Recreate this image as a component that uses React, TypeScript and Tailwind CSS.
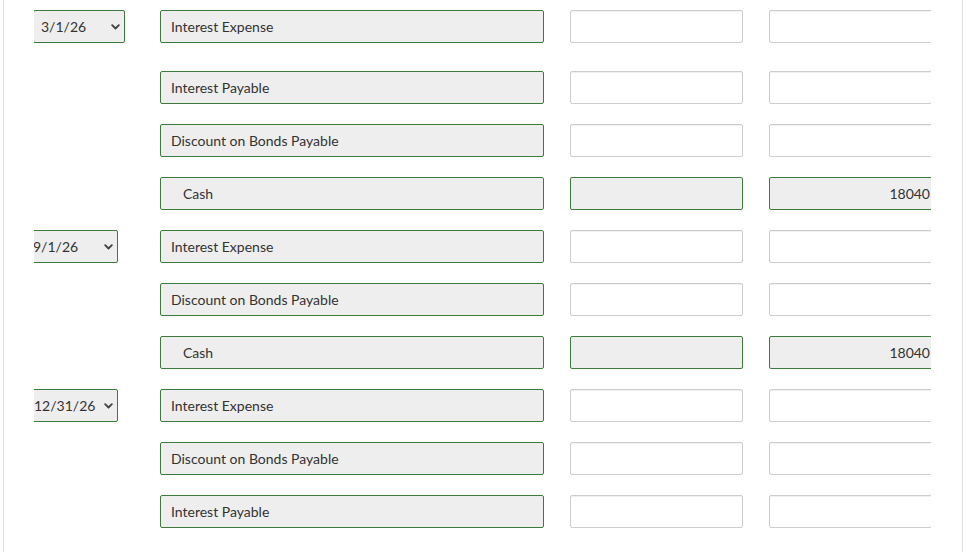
import React from 'react';

type Row = {
  date?: { label: string; shift: number; width: number };
  account: string;
  indent?: boolean;
  credit?: string;
  filled?: boolean;
  top: string;
};

const rows: Row[] = [
  { date: { label: '3/1/26', shift: 1, width: 92 }, account: 'Interest Expense', top: 'mt-[10px]' },
  { account: 'Interest Payable', top: 'mt-[28px]' },
  { account: 'Discount on Bonds Payable', top: 'mt-[20px]' },
  { account: 'Cash', indent: true, credit: '18040', filled: true, top: 'mt-[20px]' },
  { date: { label: '9/1/26', shift: 9, width: 93 }, account: 'Interest Expense', top: 'mt-[20px]' },
  { account: 'Discount on Bonds Payable', top: 'mt-[20px]' },
  { account: 'Cash', indent: true, credit: '18040', filled: true, top: 'mt-[20px]' },
  { date: { label: '12/31/26', shift: 8, width: 92 }, account: 'Interest Expense', top: 'mt-[20px]' },
  { account: 'Discount on Bonds Payable', top: 'mt-[20px]' },
  { account: 'Interest Payable', top: 'mt-[20px]' },
];

const Chevron = () => (
  <svg width="9" height="6" viewBox="0 0 9 6" className="shrink-0">
    <path d="M1.2 1.2 L4.5 4.5 L7.8 1.2" fill="none" stroke="#444" strokeWidth="1.9" strokeLinecap="round" strokeLinejoin="round" />
  </svg>
);

const DateSelect: React.FC<{ label: string; shift: number; width: number }> = ({ label, shift, width }) => (
  <div
    className="h-[33px] flex items-center justify-between pl-[7px] pr-[4px] bg-[#eeeeee] border border-[#3d7b3d] rounded-[2px] text-[#333]"
    style={{ marginLeft: -shift, width }}
  >
    <span>{label}</span>
    <Chevron />
  </div>
);

export default function App() {
  return (
    <div className="w-[967px] h-[552px] bg-white overflow-hidden" style={{ fontFamily: 'Lato, "Open Sans", sans-serif' }}>
      <div className="ml-[3px] w-[960px] h-full border-x border-[#e2e2e2]">
        <div className="ml-[30px] w-[897px] overflow-hidden text-[14px] pb-10">
          {rows.map((r, i) => (
            <div key={i} className={`flex h-[33px] ${r.top}`}>
              <div className="w-[126px] shrink-0">
                {r.date && <DateSelect {...r.date} />}
              </div>
              <div
                className={`w-[384px] shrink-0 h-[33px] flex items-center bg-[#eeeeee] border border-[#3d7b3d] rounded-[2px] text-[#333] ${
                  r.indent ? 'pl-[22px]' : 'pl-[10px]'
                }`}
              >
                {r.account}
              </div>
              <div
                className={`ml-[26px] w-[173px] shrink-0 h-[33px] rounded-[2px] border ${
                  r.filled ? 'bg-[#eeeeee] border-[#3d7b3d]' : 'bg-white border-[#cccccc] shadow-[inset_0_1px_1px_rgba(0,0,0,0.06)]'
                }`}
              />
              <div
                className={`ml-[26px] w-[172px] shrink-0 h-[33px] rounded-[2px] border flex items-center justify-end pr-[10px] text-[#333] ${
                  r.filled ? 'bg-[#eeeeee] border-[#3d7b3d]' : 'bg-white border-[#cccccc] shadow-[inset_0_1px_1px_rgba(0,0,0,0.06)]'
                }`}
              >
                {r.credit}
              </div>
            </div>
          ))}
        </div>
      </div>
    </div>
  );
}
